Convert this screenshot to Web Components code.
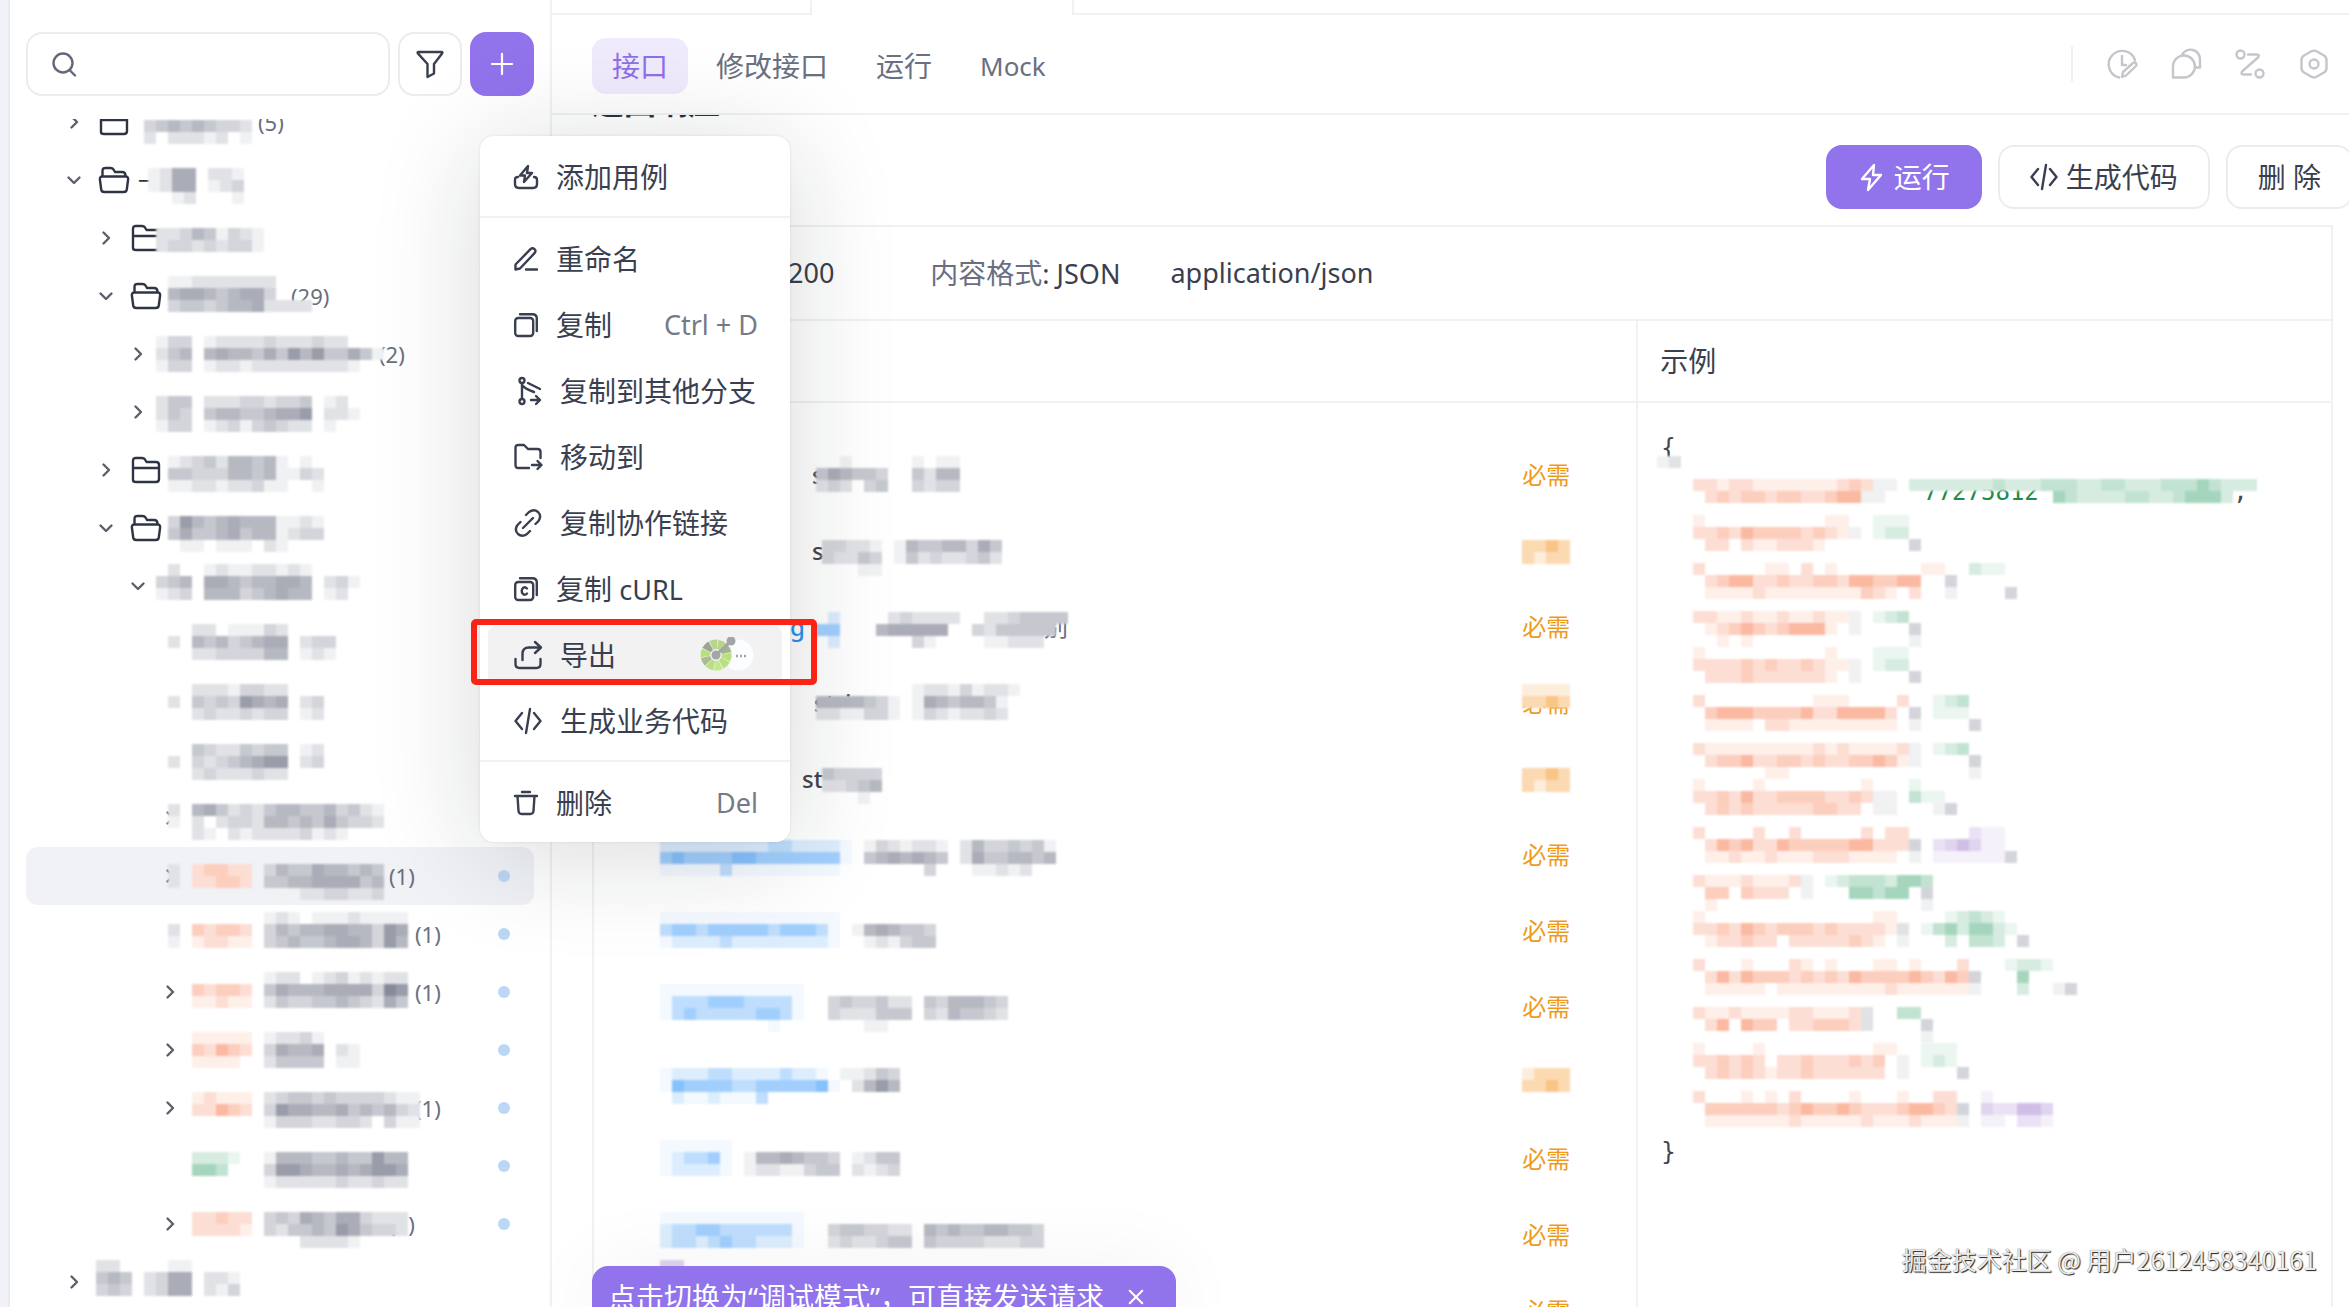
<!DOCTYPE html>
<html lang="zh-CN">
<head>
<meta charset="utf-8">
<title>接口</title>
<style>
  html, body {
    margin: 0;
    height: 100%;
  }
  body {
    font-family: "Noto Sans", "Noto Sans CJK SC", sans-serif;
    font-size: 28px;
    line-height: 36px;
    color: #3a3f50;
    background: #fff;
    overflow: hidden;
    --line: #f0f1f3;
    --accent: #9173ec;
    --muted: #6a6f7f;
  }
</style>
</head>
<body>
<app-shell></app-shell>

<script>
  // ---------- icons ----------
  const ICONS = {
    search: ['0 0 24 24', '<circle cx="11" cy="11" r="9.5"/><path d="M17.500 18 23 23.500"/>'],
    filter: ['0 0 28 28', '<path d="M2.500 2h23q1.500 0 .6 1.400L18 14v9.500l-6.500 3.500V14L1.900 3.400Q1 2 2.500 2z"/>'],
    plus: ['0 0 24 24', '<path d="M12 1v22M1 12h22"/>'],
    right: ['0 0 24 24', '<path d="m9.500 6.500 5.500 5.500-5.500 5.500"/>'],
    down: ['0 0 24 24', '<path d="m6.500 9.500 5.500 5.500 5.500-5.500"/>'],
    folder: ['0 0 32 28', '<path d="M3 24V5q0-3 3-3h6q2 0 3 1.500l1.500 2.500H26q3 0 3 3v14q0 3-3 3H6q-3 0-3-2zM3 12h26"/>'],
    folderOpen: ['0 0 32 28', '<path d="M4.500 10V5q0-3 3-3h5q2 0 3 1.500l1.500 2.500H24q3.500 0 3.500 3.500V10M4.500 10.500h23q3 0 2.600 3l-1.300 10q-.4 2.500-3 2.500H6.200q-2.600 0-3-2.500l-1.300-10q-.4-3 2.600-3z"/>'],
    addCase: ['0 0 24 24', '<path d="M14 1 6 10.500h5L10 17l8-9h-5zM4 12q-3 0-3 3v4q0 4 4 4h14q4 0 4-4v-4q0-3-3-3"/>'],
    edit: ['0 0 24 24', '<path d="M1.500 22.500v-5L16.500 2.200q2-1.700 4 0t0 4L6 21.500zM12 22.500h11"/>'],
    copy: ['0 0 24 24', '<rect x="1.200" y="5" width="18" height="18" rx="3"/><path d="M6 1.200h12.500q4.300 0 4.300 4.300V18"/>'],
    copyC: ['0 0 24 24', '<rect x="1.200" y="5" width="18" height="18" rx="3"/><path d="M6 1.200h12.500q4.300 0 4.300 4.300V18M13 11.500q-2.500-2.500-4.500 0-1.500 2.500 0 5 2 2.500 4.500 0"/>'],
    branch: ['0 0 28 28', '<circle cx="8" cy="3.500" r="2.500"/><circle cx="8" cy="24.500" r="2.500"/><path d="M8 6v16M8 8q3 4 12 7M14 6l12 6M17 23h8M22 19l4 4-4 4"/>'],
    moveTo: ['0 0 28 28', '<path d="M15 25H4.500q-3 0-3-3V5q0-3 3-3H10l4 4h9.500q3 0 3 3v6M18 22h9M23.500 18l4 4-4 4"/>'],
    link: ['0 0 28 28', '<path d="M12 6l3-3q5-3.500 9 0 4 4 .5 9l-3 3M16 22l-3 3q-5 3.500-9 0-4-4-.5-9l3-3M9 19 19 9"/>'],
    share: ['0 0 28 28', '<path d="M1.500 18v5q0 4 4 4h17q4 0 4-4v-5M8.500 19v-6q0-6.500 6.500-6.500h11M21 1l6 5.500-6 5.500"/>'],
    code: ['0 0 28 28', '<path d="M8 6 1.500 14 8 22M20 6l6.500 8-6.500 8M16 2l-4 24"/>'],
    trash: ['0 0 24 24', '<path d="M1 5h22M8 1h8M3.500 5l1 15q.3 3 3.200 3h8.600q2.900 0 3.200-3l1-15"/>'],
    bolt: ['0 0 28 28', '<path d="M16 2 4 16h8l-2 11 13-15h-8z"/>'],
    close: ['0 0 18 18', '<path d="m2 2 14 14M16 2 2 16"/>'],
    history: ['0 0 30 30', '<path d="M12 28.500A13.500 13.500 0 1 1 28 11M15 7v9h4M15 28l1-5L26 14q2-1 3 .5t0 2.500L19 26.500z"/>'],
    chat: ['0 0 30 30', '<path d="M2 28.500V16.500a11 11 0 1 1 11 12zM11 6a9.500 9.500 0 0 1 18 5v7.500h-4.500"/>'],
    flow: ['0 0 30 30', '<circle cx="5.500" cy="5.500" r="4"/><circle cx="24.500" cy="24.500" r="4"/><path d="M13 5.500h9q3 0 1 3L7.500 22q-2.500 3.500 1 3.500H16"/>'],
    hex: ['0 0 30 30', '<path d="M12.500 2.300q2.500-1.400 5 0l7.500 4.200q2.500 1.500 2.500 4.500v8q0 3-2.500 4.500l-7.500 4.200q-2.500 1.400-5 0L5 23.500Q2.500 22 2.500 19v-8q0-3 2.500-4.500z"/><circle cx="15" cy="15" r="4.500"/>']
  };

  class UiIcon extends HTMLElement {
    connectedCallback() {
      const [box, body] = ICONS[this.getAttribute('name')];
      const size = this.getAttribute('size') || 24;
      this.attachShadow({ mode: 'open' }).innerHTML = `
        <style>
          :host { display: inline-flex; flex: none; }
          svg { display: block; fill: none; stroke: currentColor; stroke-width: 2.400; stroke-linecap: round; stroke-linejoin: round; overflow: visible; }
        </style>
        <svg width="${size}" height="${size}" viewBox="${box}" aria-hidden="true">${body}</svg>`;
    }
  }
  customElements.define('ui-icon', UiIcon);

  // ---------- mosaic: 12px tiles, one character per tile, "|" starts a new line ----------
  const TONES = {};
  const addTones = (keys, base, amounts) => [...keys].forEach((key, i) => {
    TONES[key] = 'rgb(' + base.map((c) => Math.round(255 - (255 - c) * amounts[i])).join(',') + ')';
  });
  addTones('123456789', [105, 110, 128], [0.1, 0.2, 0.29, 0.38, 0.48, 0.57, 0.68, 0.8, 0.9]);
  addTones('abcd', [248, 138, 100], [0.14, 0.28, 0.42, 0.6]);
  addTones('ghij', [50, 160, 105], [0.1, 0.2, 0.3, 0.44]);
  addTones('pqrst', [60, 155, 250], [0.06, 0.18, 0.33, 0.48, 0.62]);
  addTones('vwxy', [150, 110, 200], [0.1, 0.2, 0.3, 0.45]);
  addTones('ABC', [245, 160, 60], [0.18, 0.4, 0.62]);

  class MosaicRun extends HTMLElement {
    connectedCallback() {
      const x = Number(this.getAttribute('x') || 0);
      const y = Number(this.getAttribute('y') || 0);
      const lines = this.getAttribute('rows').split('|');
      const longest = Math.max(...lines.map((l) => l.length));
      const w = this.getAttribute('w') || x + longest * 12;
      let rects = '';
      lines.forEach((line, r) => [...line].forEach((key, c) => {
        if (TONES[key]) rects += `<rect x="${x + c * 12}" y="${y + r * 12}" width="12" height="12" fill="${TONES[key]}"/>`;
      }));
      this.attachShadow({ mode: 'open' }).innerHTML = `
        <style>
          :host { display: block; flex: none; align-self: flex-start; position: relative; z-index: 1; }
          svg { display: block; overflow: visible; shape-rendering: crispEdges; filter: blur(1px); }
        </style>
        <svg width="${Math.max(w, 1)}" height="1" aria-hidden="true">${rects}</svg>`;
    }
  }
  customElements.define('mosaic-run', MosaicRun);

  // ---------- buttons ----------
  class UiButton extends HTMLElement {
    connectedCallback() {
      const label = this.getAttribute('label');
      this.attachShadow({ mode: 'open' }).innerHTML = `
        <style>
          :host { display: block; flex: none; }
          button {
            display: flex; align-items: center; justify-content: center; gap: 8px;
            box-sizing: border-box; height: 64px; min-width: 64px; padding: 0 30px;
            border: 2px solid #ececef; border-radius: 16px; background: #fff;
            font: inherit; color: inherit; white-space: nowrap;
          }
          :host([primary]) button { background: var(--accent); border-color: var(--accent); color: #fff; }
          :host([square]) button { padding: 0; }
        </style>
        <button ${label ? `aria-label="${label}"` : ''}><slot></slot></button>`;
    }
  }
  customElements.define('ui-button', UiButton);

  // ---------- sidebar ----------
  class TreeRow extends HTMLElement {
    connectedCallback() {
      const at = (n) => this.getAttribute(n);
      const arrow = at('arrow') ? `<ui-icon name="${at('arrow')}"></ui-icon>` : '';
      const folder = at('folder') ? `<ui-icon class="folder" name="${at('folder')}" size="32"></ui-icon>` : '';
      const name = at('name') ? `<span class="name">${at('name')}</span>` : '';
      const count = at('count') ? `<span class="count">(${at('count')})</span>` : '';
      const dot = this.hasAttribute('dot') ? '<i class="dot"></i>' : '';
      this.attachShadow({ mode: 'open' }).innerHTML = `
        <style>
          :host { display: block; height: 58px; }
          .row {
            display: flex; align-items: center; height: 58px; box-sizing: border-box;
            padding: 0 24px 0 calc(36px + ${at('level')} * 32px);
            font-size: 22px; line-height: 30px; color: var(--muted);
            border-radius: 12px;
          }
          :host([selected]) .row { background: #f0f2f6; }
          .arrow { width: 24px; height: 24px; margin-right: 12px; color: #5c606c; flex: none; }
          .folder { color: #2f3444; }
          .name { margin: 0 -16px 0 8px; color: #2f3444; flex: none; white-space: nowrap; }
          .count { margin-left: 6px; }
          .dot { width: 12px; height: 12px; border-radius: 50%; background: #bcd6f6; margin-left: auto; }
        </style>
        <div class="row">
          <span class="arrow">${arrow}</span>${folder}${name}
          <mosaic-run x="${at('mx')}" y="${at('my')}" rows="${at('rows')}" ${at('w') ? `w="${at('w')}"` : ''}></mosaic-run>
          ${count}${dot}
        </div>`;
    }
  }
  customElements.define('tree-row', TreeRow);

  const TREE = [
    { level: 0, arrow: 'right', folder: 'folder', mx: 14, my: 27, rows: '345454332|2.22212.1', count: '5' },
    { level: 0, arrow: 'down', folder: 'folderOpen', name: '一', mx: 4, my: 17, rows: '1266.221|1266.123|..12...1' },
    { level: 1, arrow: 'right', folder: 'folder', mx: -6, my: 19, rows: '223541321|233232331' },
    { level: 1, arrow: 'down', folder: 'folderOpen', mx: -6, my: 9, w: 123, rows: '.112222222|.566545663|.344345562222', count: '29' },
    { level: 2, arrow: 'right', mx: -6, my: 11, w: 211, rows: '133.122223222322|245.565546475744641|133.1221222222221', count: '2' },
    { level: 2, arrow: 'right', mx: -6, my: 13, rows: '244.222332334.12|243.455445667.221|133.123134322.1' },
    { level: 1, arrow: 'right', folder: 'folder', mx: -6, my: 15, rows: '.1234255451.1|.4433355451132|.1122122311..1' },
    { level: 1, arrow: 'down', folder: 'folderOpen', mx: -6, my: 17, rows: '.3754565551121|.4644564551233|..11.111.21' },
    { level: 2, arrow: 'down', mx: -6, my: 7, rows: '.2..121122121|345.665455665.231|123.555345655.12' },
    { level: 3, mx: -26, my: 9, rows: '..22.11132|2.54534566.233|..22333355.121' },
    { level: 3, mx: -26, my: 11, rows: '..22213322|2.43437656.23|..23223233.12' },
    { level: 3, mx: -26, my: 13, rows: '..43224344.12|2.32345677.23|..23222322' },
    { level: 3, arrow: 'right', mx: -26, my: 15, rows: '2.5642324554453421|1.2.23325545464332|..21.2122223121' },
    { level: 3, arrow: 'right', mx: -26, my: 17, w: 189, rows: '2.bccbb.3544655454|2.bbccb.4455666645|........1112233223', count: '1', dot: true, selected: true },
    { level: 3, mx: -26, my: 7, w: 215, rows: '........121.11121111|2.cbccb.354556655376|1.abbaa.345445665375', count: '1', dot: true },
    { level: 3, arrow: 'right', mx: -26, my: 9, w: 215, rows: '........122.12312122|..cbccb.465556666387|..aabaa.243344543264', count: '1', dot: true },
    { level: 3, arrow: 'right', mx: -26, my: 11, rows: '..aaaaa.12231|..cbdcb.36556.21|..aaaa..24444.11', dot: true },
    { level: 3, arrow: 'right', mx: -26, my: 13, w: 215, rows: '..abaaa.2344343333211|..bbdcb.3766556454532|........133322332.311', count: '1', dot: true },
    { level: 3, mx: -26, my: 15, rows: '..hhhg..155544544755|..jji...377655656776|........122222322322', dot: true },
    { level: 3, arrow: 'right', mx: -26, my: 17, w: 189, rows: '..bbcbb.343654663222|..bbbba.324454764332|...........22221', count: '1', dot: true },
    { level: 0, arrow: 'right', mx: -2, my: 7, rows: '22....11|454.2366.221|343.2366.213' }
  ];

  class SideBar extends HTMLElement {
    connectedCallback() {
      this.attachShadow({ mode: 'open' }).innerHTML = `
        <style>
          :host { display: flex; flex-direction: column; min-height: 0; border-right: 2px solid var(--line); background: #fff; }
          .tools { display: flex; gap: 8px; padding: 32px 16px 0; height: 119px; box-sizing: border-box; }
          label {
            flex: 1; display: flex; align-items: center; gap: 12px; min-width: 0;
            box-sizing: border-box; height: 64px; padding: 0 24px;
            border: 2px solid #ececef; border-radius: 16px; color: #636879;
          }
          input { flex: 1; min-width: 0; border: 0; outline: 0; background: none; font: inherit; color: inherit; }
          nav { flex: 1; min-height: 0; overflow: hidden; padding: 0 16px; }
          .list { margin-top: -26px; }
        </style>
        <div class="tools">
          <label><ui-icon name="search"></ui-icon><input type="text" aria-label="搜索"></label>
          <ui-button square label="筛选"><ui-icon name="filter" size="28"></ui-icon></ui-button>
          <ui-button square primary label="新建"><ui-icon name="plus" size="22"></ui-icon></ui-button>
        </div>
        <nav><div class="list"></div></nav>`;
      const list = this.shadowRoot.querySelector('.list');
      TREE.forEach((item) => {
        const row = document.createElement('tree-row');
        Object.entries(item).forEach(([k, v]) => row.setAttribute(k, v === true ? '' : v));
        list.appendChild(row);
      });
    }
  }
  customElements.define('side-bar', SideBar);

  // ---------- header ----------
  class TopBar extends HTMLElement {
    connectedCallback() {
      this.attachShadow({ mode: 'open' }).innerHTML = `
        <style>
          :host { display: block; }
          .strip { display: grid; grid-template-columns: 258px 264px 1fr; height: 15px; }
          .strip span { border-bottom: 2px solid var(--line); }
          .strip .open { border: 2px solid var(--line); border-width: 0 2px; }
          .bar {
            display: flex; align-items: center; justify-content: space-between;
            height: 98px; padding: 0 20px 0 40px; border-bottom: 2px solid var(--line);
          }
          .tabs { display: flex; gap: 8px; padding-top: 4px; }
          .tabs button {
            height: 56px; padding: 0 20px; border: 0; border-radius: 14px; background: none;
            font: inherit; color: #697080;
          }
          .tabs .active { background: #f0eafd; color: #8e6fe8; }
          .tabs .latin { font-size: 26px; }
          .tools { display: flex; align-items: center; gap: 34px; color: #c4c6cb; }
          .tools::before { content: ""; width: 2px; height: 36px; background: var(--line); }
        </style>
        <div class="strip"><span></span><b class="open"></b><span></span></div>
        <div class="bar">
          <div class="tabs">
            <button class="active">接口</button><button>修改接口</button><button>运行</button><button class="latin">Mock</button>
          </div>
          <div class="tools">
            <ui-icon name="history" size="30"></ui-icon><ui-icon name="chat" size="30"></ui-icon>
            <ui-icon name="flow" size="30"></ui-icon><ui-icon name="hex" size="30"></ui-icon>
          </div>
        </div>`;
    }
  }
  customElements.define('top-bar', TopBar);

  // ---------- response fields ----------
  const pad = (n, s) => '.'.repeat(n) + s;
  const FIELDS = [
    { lead: 218, text: 's', my: 19, rows: [pad(13, '..1.....1.11'), pad(13, '465443..4255'), pad(13, '232.34..3233')] },
    { lead: 218, text: 's', mx: 60, my: 27, rows: [pad(14, '33221.154455364'), pad(14, '32243.142322342'), pad(17, '11')], need: ['BBCB|BABB', 27] },
    { lead: 196, text: 'g', blue: true, tail: '别', my: 23, rows: [pad(13, '.q....232222..2234444'), pad(13, 'ss...566666..3244444'), pad(13, '.q......31....11222')] },
    { lead: 220, text: 'string', my: 19, rows: [pad(20, '.122131221'), pad(13, '5555431.16545541'), pad(13, '2211331.13212232')], need: ['AAAA|BBCB', 19] },
    { lead: 208, text: 'st', mx: 60, my: 27, rows: [pad(14, '43333'), pad(14, '22345'), pad(17, '1')], need: ['BBCB|BABB', 27] },
    { my: 23, rows: ['qqqqqqqqqrrqqqqp.1321221.25334341', 'stssssttsssssssp.4565654.26445545', 'ppppprppppppppp.......3...11212'] },
    { my: 19, rows: ['ppppppppppppppp', 'rssrsssssrsssrp.1565443', 'pqqqqrqqqqqqqqp..121344'] },
    { my: 15, rows: ['pppppppppppp', 'prrrsssrrrrp..3433422.4355543', 'prsrrrrrssrp..3222444.3254432', '.........p.......11'] },
    { my: 23, rows: ['pqqqrrqqqqrqqp.11243', 'ptssssrrssssstp.2575', '.qppqpppr'], need: ['ABBB|BBCB', 23] },
    { my: 19, rows: ['pppppp', 'pqrrsp.15565443.1244', 'pqqqqp.12211344.2123'] },
    { my: 15, rows: ['pppppppppppp', 'qrrssrrrrrrp..3443322.5454455443', 'qrrqrsrrqqqp..2322344.4333322233', '', 'xx'] },
    {}
  ];

  class FieldRow extends HTMLElement {
    set data(f) {
      const need = f.need ? `<mosaic-run w="48" y="${f.need[1]}" rows="${f.need[0]}"></mosaic-run>` : '';
      // fully covered labels keep no text of their own
      const label = f.need && f.need[1] !== 19 ? '' : '必需';
      this.attachShadow({ mode: 'open' }).innerHTML = `
        <style>
          :host { display: grid; grid-template-columns: 1fr 48px; height: 76px; padding-right: 66px; }
          .stack { display: grid; align-items: center; font-size: 24px; line-height: 32px; }
          .stack > * { grid-area: 1 / 1; }
          .stack > mosaic-run { align-self: start; }
          .type { padding-left: ${f.lead || 0}px; font-weight: 500; color: #44464f; }
          .blue { color: #2b8ff0; }
          .tail { padding-left: 450px; color: var(--muted); }
          .need { color: #f09a1c; white-space: nowrap; }
        </style>
        <div class="stack">
          ${f.text ? `<span class="type ${f.blue ? 'blue' : ''}">${f.text}</span>` : ''}
          ${f.tail ? `<span class="tail">${f.tail}</span>` : ''}
          ${f.rows ? `<mosaic-run x="${f.mx || 66}" y="${f.my}" rows="${f.rows.join('|')}"></mosaic-run>` : ''}
        </div>
        <div class="stack need"><span>${label}</span>${need}</div>`;
    }
  }
  customElements.define('field-row', FieldRow);

  const JSON_LINES = [
    [10, 'bbabbaaaaaaabcb11.hhhhhhhihhhiiihhiihhhiiijihhh', '.bcbccbccbbcdd11..............jihhhhiihhijjjh'],
    [2, 'a..........aa..ggg', 'bbcbdccccbcba1.ghh', '.bb.baabbba.......3'],
    [6, 'b.....aa.b.a.......aa..hgg', '.bcddbbcbbccbddccdd..3', '.aaaabaaaaaaaacba.b..1....3'],
    [10, 'bbaabaabaabaa1.ghi', '.abcdcbcddda.1....3', '..a.a.............1'],
    [2, 'a..........a...ggg', 'bbbbcbcbbcbaa1.ghh', '.bbbcbbbbbba.1....3'],
    [6, 'b.........aaa....b..ghi', '.cdddccccdbbddddb.3.ggg', '.aaaa.bbaaaaaaaaa.1....3'],
    [10, 'baaaaaaaaababaaaab1.ghi', '.bccdbbccbcbbccdca1....3', '......aa...............1'],
    [2, 'a....a........a...g', 'bbcbdbbccccbbcb11.igg', '.bcbcbbbbbccbb.11...13'],
    [6, 'b....b..b.....b.bb.....wvv', '.bdcdbbdcccccddbbb3.wxyxvv', '.aabaabaaabbbaaaa.1.vvvvvv3'],
    [10, 'baaabaaab1.ghiiihjji', '.cc.cbbb.1...jjijj.3', '.a.................1'],
    [2, 'a..............aa....ghihg', 'bbcbdcbcccbcbbbba2.gijhjjhg', '.abbcbb.bbbbbcba.1...h.iih.3'],
    [6, 'b...a...ba.a...aa.a...b...ghhg', '.bdbdcccbcbcbdccccdcbdc3...j', '.aaaaa.aaaaaaaaabaaaaaa1...h..13'],
    [10, 'baabaaaabbaaab2..ii', '.bd.dcc.bbcccb2....3', '...................1'],
    [2, 'a....a.........aa..ggg', 'bbcbcb.bbcbbbcbc.1.ghg', '.bcbcbabbcbbbbbb.1....3'],
    [6, 'b...a.a.b....a...a..bb..v', '.ccccccbcdccdcbbbcddcb3.xwwyyx', '.aaaaaaabaaaaabaaabaaa1.vv.wwv']
  ];

  class JsonView extends HTMLElement {
    connectedCallback() {
      const lines = JSON_LINES.map(([y, ...rows], i) => `
        <div class="line">
          ${i === 0 ? '<span class="value">77275812</span><span class="comma">,</span>' : ''}
          <mosaic-run x="32" y="${y}" rows="${rows.join('|')}"></mosaic-run>
        </div>`).join('');
      this.attachShadow({ mode: 'open' }).innerHTML = `
        <style>
          :host { display: block; padding: 22px 20px 22px 23px; font-family: "DejaVu Sans Mono", monospace; font-size: 24px; line-height: 46px; color: #44464f; }
          .line { display: grid; height: 44px; }
          .line > * { grid-area: 1 / 1; }
          .line > mosaic-run { align-self: start; }
          .value { padding-left: 262px; color: #1f8a4c; }
          .comma { padding-left: 572px; }
        </style>
        <div class="line"><span>{</span><mosaic-run x="-4" y="31" rows="12"></mosaic-run></div>
        ${lines}
        <div class="line"><span>}</span></div>`;
    }
  }
  customElements.define('json-view', JsonView);

  class ResponsePanel extends HTMLElement {
    connectedCallback() {
      this.attachShadow({ mode: 'open' }).innerHTML = `
        <style>
          :host { display: flex; flex-direction: column; min-height: 0; overflow: hidden; padding: 0 16px 0 40px; }
          h2 { margin: -33px 0 0; font-size: 32px; line-height: 40px; font-weight: 700; color: #2f3040; flex: none; }
          .actions { display: flex; justify-content: flex-end; gap: 16px; margin: 23px -20px 16px 0; flex: none; }
          .panel { flex: 1; border: 2px solid var(--line); border-bottom: 0; min-height: 0; }
          .status { display: flex; align-items: center; gap: 50px; height: 92px; padding-left: 194px; border-bottom: 2px solid var(--line); }
          .latin { font-size: 27px; }
          .code { margin-right: 46px; }
          .format { color: var(--muted); }
          .format .latin { color: #3a3f50; }
          .split { display: grid; grid-template-columns: 3fr 2fr; }
          .split > div + div { border-left: 2px solid var(--line); }
          .head { display: flex; align-items: center; height: 80px; padding: 0 22px; border-bottom: 2px solid var(--line); }
          .fields { padding-top: 34px; }
        </style>
        <h2>返回响应</h2>
        <div class="actions">
          <ui-button primary><ui-icon name="bolt" size="28"></ui-icon>运行</ui-button>
          <ui-button><ui-icon name="code" size="28"></ui-icon>生成代码</ui-button>
          <ui-button>删 除</ui-button>
        </div>
        <div class="panel">
          <div class="status">
            <span class="latin code">200</span>
            <span class="format">内容格式<span class="latin">: JSON</span></span>
            <span class="latin">application/json</span>
          </div>
          <div class="split">
            <div><div class="head"></div><div class="fields"></div></div>
            <div><div class="head">示例</div><json-view></json-view></div>
          </div>
        </div>`;
      const fields = this.shadowRoot.querySelector('.fields');
      FIELDS.forEach((f) => {
        const row = document.createElement('field-row');
        row.data = f;
        fields.appendChild(row);
      });
    }
  }
  customElements.define('response-panel', ResponsePanel);

  // ---------- context menu ----------
  class MenuItem extends HTMLElement {
    connectedCallback() {
      const key = this.getAttribute('shortcut');
      this.attachShadow({ mode: 'open' }).innerHTML = `
        <style>
          :host { display: block; position: relative; }
          button {
            display: flex; align-items: center; gap: 18px; width: 100%; height: 58px;
            padding: 0 24px 0 26px; border: 0; border-radius: 8px; background: none;
            font: inherit; color: inherit; text-align: left; white-space: nowrap;
          }
          :host([active]) button { background: #f2f2f3; }
          kbd { margin-left: auto; font: inherit; font-size: 27px; color: #757a88; }
          ::slotted(svg) { margin-left: auto; }
          .frame { position: absolute; inset: -7px -35px -1px -17px; border: 6px solid #fb2216; border-radius: 5px; pointer-events: none; }
        </style>
        <button role="menuitem">
          <ui-icon name="${this.getAttribute('icon')}" size="${this.getAttribute('size') || 24}"></ui-icon>
          <slot></slot>${key ? `<kbd>${key}</kbd>` : ''}
        </button>
        ${this.hasAttribute('active') ? '<div class="frame"></div>' : ''}`;
    }
  }
  customElements.define('menu-item', MenuItem);

  class ContextMenu extends HTMLElement {
    connectedCallback() {
      // green ring split into wedges
      let wedges = '';
      const greens = ['#b7d68c', '#a3b38c', '#b9e07f', '#b9e07f', '#c3e88c', '#b9e07f', '#a9bd8e', '#b9e07f', '#9aa592', '#b7d68c'];
      greens.forEach((fill, i) => {
        const a = (i * 36 - 80) * Math.PI / 180;
        const b = a + 33 * Math.PI / 180;
        const p = (r, t) => `${(16 + r * Math.cos(t)).toFixed(1)} ${(18 + r * Math.sin(t)).toFixed(1)}`;
        wedges += `<path fill="${fill}" d="M${p(6, a)}L${p(15.5, a)}A15.500 15.500 0 0 1 ${p(15.5, b)}L${p(6, b)}z"/>`;
      });
      this.attachShadow({ mode: 'open' }).innerHTML = `
        <style>
          :host {
            position: absolute; left: 480px; top: 136px; z-index: 5;
            box-sizing: border-box; width: 310px; padding: 12px 8px 10px;
            display: flex; flex-direction: column; gap: 8px;
            background: #fff; border-radius: 14px;
            box-shadow: 0 0 3px rgba(0, 0, 0, 0.1), 0 12px 110px rgba(20, 24, 30, 0.16);
          }
          hr { width: auto; height: 2px; margin: 2px -8px 4px; border: 0; background: var(--line); }
          .latin { font-size: 27px; }
        </style>
        <menu-item icon="addCase">添加用例</menu-item>
        <hr>
        <menu-item icon="edit">重命名</menu-item>
        <menu-item icon="copy" shortcut="Ctrl + D">复制</menu-item>
        <menu-item icon="branch" size="28">复制到其他分支</menu-item>
        <menu-item icon="moveTo" size="28">移动到</menu-item>
        <menu-item icon="link" size="28">复制协作链接</menu-item>
        <menu-item icon="copyC"><span>复制 <span class="latin">cURL</span></span></menu-item>
        <menu-item icon="share" size="28" active>导出
          <svg width="58" height="36" viewBox="0 0 58 36" aria-hidden="true">
            <circle cx="38" cy="18" r="15.500" fill="#fbfdfe"/>
            <circle cx="16" cy="18" r="16.500" fill="#f2f2f3"/>
            ${wedges}
            <path d="M16 18 31 4" stroke="#a3a5a6" stroke-width="3"/>
            <circle cx="16" cy="18" r="4.500" fill="#a3a5a6"/><circle cx="31" cy="4" r="4.500" fill="#a3a5a6"/>
            <path d="M36 19h2M40 19h2M44 19h2" stroke="#a0a4a8" stroke-width="2.500"/>
          </svg>
        </menu-item>
        <menu-item icon="code" size="28">生成业务代码</menu-item>
        <hr>
        <menu-item icon="trash" shortcut="Del">删除</menu-item>`;
    }
  }
  customElements.define('context-menu', ContextMenu);

  // ---------- shell ----------
  class AppShell extends HTMLElement {
    connectedCallback() {
      this.attachShadow({ mode: 'open' }).innerHTML = `
        <style>
          :host { display: grid; grid-template-columns: 10px 542px 1fr; height: 100vh; position: relative; overflow: hidden; }
          .rail { background: #f0f2f8; border-right: 2px solid #e9ebf0; }
          main { display: flex; flex-direction: column; min-width: 0; min-height: 0; }
          response-panel { flex: 1; }
          .toast {
            position: absolute; left: 592px; bottom: -20px; z-index: 4;
            display: flex; align-items: center; gap: 24px; height: 61px; padding: 0 32px 0 16px;
            border-radius: 16px; background: var(--accent); color: #fff; white-space: nowrap;
            box-shadow: 0 0 80px rgba(0, 0, 0, 0.06);
          }
          .toast button { display: flex; border: 0; padding: 0; background: none; color: inherit; }
          .mark {
            position: absolute; right: 32px; bottom: 30px; font-family: "Noto Sans CJK SC", sans-serif;
            font-size: 25px; color: #ededed; text-shadow: 1px 1px 1px #222, 0 0 1px #555;
          }
        </style>
        <div class="rail"></div>
        <side-bar></side-bar>
        <main><top-bar></top-bar><response-panel></response-panel></main>
        <context-menu role="menu"></context-menu>
        <div class="toast"><span>点击切换为“调试模式”，可直接发送请求</span><button aria-label="关闭"><ui-icon name="close" size="16"></ui-icon></button></div>
        <div class="mark">掘金技术社区 @ 用户2612458340161</div>`;
    }
  }
  customElements.define('app-shell', AppShell);
</script>
</body>
</html>
